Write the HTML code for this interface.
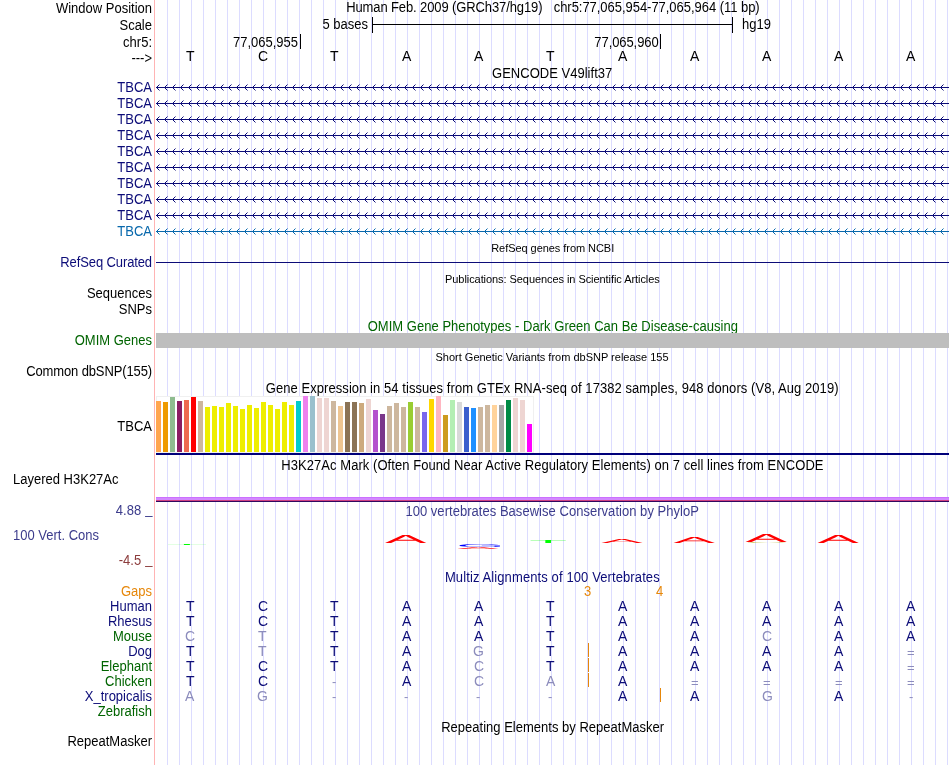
<!DOCTYPE html><html><head><meta charset="utf-8"><title>UCSC Genome Browser</title><style>
html,body{margin:0;padding:0;background:#fff;}
body{width:950px;height:765px;position:relative;overflow:hidden;font-family:"Liberation Sans",sans-serif;font-size:13px;color:#000;}
.t{position:absolute;white-space:pre;line-height:16px;height:16px;transform:scaleY(1.07);transform-origin:0 12.5px;}
.n,.s{transform:none;}
.r{text-align:right;left:0;width:152px;}
.c{text-align:center;left:156px;width:793px;}
.s{font-size:11px;}
.b{position:absolute;}
.nv{color:#0c0c78;}
.gr{color:#006400;}
svg{position:absolute;left:0;top:0;}
#w{position:absolute;left:0;top:0;width:950px;height:765px;will-change:transform;}
</style></head><body><div id="w">
<div class="b" style="left:0;top:0;width:950px;height:765px;background:repeating-linear-gradient(90deg,transparent 0,transparent 11px,#dcdcff 11px,#dcdcff 12px);background-position:156px 0;background-size:12px 100%;clip-path:inset(0 0 0 160px);"></div>
<div class="b" style="left:154px;top:0;width:1px;height:765px;background:#ffb4b4;"></div>
<div class="t r " style="top:1px;">Window Position</div>
<div class="t r " style="top:18px;">Scale</div>
<div class="t r " style="top:35px;">chr5:</div>
<div class="t r " style="top:51px;">---&gt;</div>
<div class="t " style="left:346.20px;top:0px;letter-spacing:-0.111px;">Human Feb. 2009 (GRCh37/hg19)</div>
<div class="t " style="left:553.70px;top:0px;letter-spacing:-0.036px;">chr5:77,065,954-77,065,964 (11 bp)</div>
<div class="t " style="left:168px;width:200px;text-align:right;top:17px;">5 bases</div>
<div class="t " style="left:742px;top:17px;">hg19</div>
<div class="b" style="left:372px;top:24px;width:361px;height:1px;background:#000"></div>
<div class="b" style="left:372px;top:17px;width:1px;height:16px;background:#000"></div>
<div class="b" style="left:732px;top:17px;width:1px;height:16px;background:#000"></div>
<div class="t " style="left:98px;width:200px;text-align:right;top:35px;">77,065,955</div>
<div class="b" style="left:300px;top:34px;width:1px;height:15px;background:#000"></div>
<div class="t " style="left:458.6px;width:200px;text-align:right;top:35px;letter-spacing:-0.08px">77,065,960</div>
<div class="b" style="left:660px;top:34px;width:1px;height:15px;background:#000"></div>
<div class="t n" style="left:186px;top:48px;font-size:14px;">T</div>
<div class="t n" style="left:258px;top:48px;font-size:14px;">C</div>
<div class="t n" style="left:330px;top:48px;font-size:14px;">T</div>
<div class="t n" style="left:402px;top:48px;font-size:14px;">A</div>
<div class="t n" style="left:474px;top:48px;font-size:14px;">A</div>
<div class="t n" style="left:546px;top:48px;font-size:14px;">T</div>
<div class="t n" style="left:618px;top:48px;font-size:14px;">A</div>
<div class="t n" style="left:690px;top:48px;font-size:14px;">A</div>
<div class="t n" style="left:762px;top:48px;font-size:14px;">A</div>
<div class="t n" style="left:834px;top:48px;font-size:14px;">A</div>
<div class="t n" style="left:906px;top:48px;font-size:14px;">A</div>
<div class="t " style="left:492.00px;top:66px;letter-spacing:0.019px;">GENCODE V49lift37</div>
<div class="t r " style="top:80px;color:#0c0c78">TBCA</div>
<div class="t r " style="top:96px;color:#0c0c78">TBCA</div>
<div class="t r " style="top:112px;color:#0c0c78">TBCA</div>
<div class="t r " style="top:128px;color:#0c0c78">TBCA</div>
<div class="t r " style="top:144px;color:#0c0c78">TBCA</div>
<div class="t r " style="top:160px;color:#0c0c78">TBCA</div>
<div class="t r " style="top:176px;color:#0c0c78">TBCA</div>
<div class="t r " style="top:192px;color:#0c0c78">TBCA</div>
<div class="t r " style="top:208px;color:#0c0c78">TBCA</div>
<div class="t r " style="top:224px;color:#0868ac">TBCA</div>
<svg width="950" height="765" viewBox="0 0 950 765"><path d="M156 87.5 H949" stroke="#0c0c78" stroke-width="1" fill="none"/><path d="M159.5 84.5L156.5 87.5L159.5 90.5M167.5 84.5L164.5 87.5L167.5 90.5M175.5 84.5L172.5 87.5L175.5 90.5M183.5 84.5L180.5 87.5L183.5 90.5M191.5 84.5L188.5 87.5L191.5 90.5M199.5 84.5L196.5 87.5L199.5 90.5M207.5 84.5L204.5 87.5L207.5 90.5M215.5 84.5L212.5 87.5L215.5 90.5M223.5 84.5L220.5 87.5L223.5 90.5M231.5 84.5L228.5 87.5L231.5 90.5M239.5 84.5L236.5 87.5L239.5 90.5M247.5 84.5L244.5 87.5L247.5 90.5M255.5 84.5L252.5 87.5L255.5 90.5M263.5 84.5L260.5 87.5L263.5 90.5M271.5 84.5L268.5 87.5L271.5 90.5M279.5 84.5L276.5 87.5L279.5 90.5M287.5 84.5L284.5 87.5L287.5 90.5M295.5 84.5L292.5 87.5L295.5 90.5M303.5 84.5L300.5 87.5L303.5 90.5M311.5 84.5L308.5 87.5L311.5 90.5M319.5 84.5L316.5 87.5L319.5 90.5M327.5 84.5L324.5 87.5L327.5 90.5M335.5 84.5L332.5 87.5L335.5 90.5M343.5 84.5L340.5 87.5L343.5 90.5M351.5 84.5L348.5 87.5L351.5 90.5M359.5 84.5L356.5 87.5L359.5 90.5M367.5 84.5L364.5 87.5L367.5 90.5M375.5 84.5L372.5 87.5L375.5 90.5M383.5 84.5L380.5 87.5L383.5 90.5M391.5 84.5L388.5 87.5L391.5 90.5M399.5 84.5L396.5 87.5L399.5 90.5M407.5 84.5L404.5 87.5L407.5 90.5M415.5 84.5L412.5 87.5L415.5 90.5M423.5 84.5L420.5 87.5L423.5 90.5M431.5 84.5L428.5 87.5L431.5 90.5M439.5 84.5L436.5 87.5L439.5 90.5M447.5 84.5L444.5 87.5L447.5 90.5M455.5 84.5L452.5 87.5L455.5 90.5M463.5 84.5L460.5 87.5L463.5 90.5M471.5 84.5L468.5 87.5L471.5 90.5M479.5 84.5L476.5 87.5L479.5 90.5M487.5 84.5L484.5 87.5L487.5 90.5M495.5 84.5L492.5 87.5L495.5 90.5M503.5 84.5L500.5 87.5L503.5 90.5M511.5 84.5L508.5 87.5L511.5 90.5M519.5 84.5L516.5 87.5L519.5 90.5M527.5 84.5L524.5 87.5L527.5 90.5M535.5 84.5L532.5 87.5L535.5 90.5M543.5 84.5L540.5 87.5L543.5 90.5M551.5 84.5L548.5 87.5L551.5 90.5M559.5 84.5L556.5 87.5L559.5 90.5M567.5 84.5L564.5 87.5L567.5 90.5M575.5 84.5L572.5 87.5L575.5 90.5M583.5 84.5L580.5 87.5L583.5 90.5M591.5 84.5L588.5 87.5L591.5 90.5M599.5 84.5L596.5 87.5L599.5 90.5M607.5 84.5L604.5 87.5L607.5 90.5M615.5 84.5L612.5 87.5L615.5 90.5M623.5 84.5L620.5 87.5L623.5 90.5M631.5 84.5L628.5 87.5L631.5 90.5M639.5 84.5L636.5 87.5L639.5 90.5M647.5 84.5L644.5 87.5L647.5 90.5M655.5 84.5L652.5 87.5L655.5 90.5M663.5 84.5L660.5 87.5L663.5 90.5M671.5 84.5L668.5 87.5L671.5 90.5M679.5 84.5L676.5 87.5L679.5 90.5M687.5 84.5L684.5 87.5L687.5 90.5M695.5 84.5L692.5 87.5L695.5 90.5M703.5 84.5L700.5 87.5L703.5 90.5M711.5 84.5L708.5 87.5L711.5 90.5M719.5 84.5L716.5 87.5L719.5 90.5M727.5 84.5L724.5 87.5L727.5 90.5M735.5 84.5L732.5 87.5L735.5 90.5M743.5 84.5L740.5 87.5L743.5 90.5M751.5 84.5L748.5 87.5L751.5 90.5M759.5 84.5L756.5 87.5L759.5 90.5M767.5 84.5L764.5 87.5L767.5 90.5M775.5 84.5L772.5 87.5L775.5 90.5M783.5 84.5L780.5 87.5L783.5 90.5M791.5 84.5L788.5 87.5L791.5 90.5M799.5 84.5L796.5 87.5L799.5 90.5M807.5 84.5L804.5 87.5L807.5 90.5M815.5 84.5L812.5 87.5L815.5 90.5M823.5 84.5L820.5 87.5L823.5 90.5M831.5 84.5L828.5 87.5L831.5 90.5M839.5 84.5L836.5 87.5L839.5 90.5M847.5 84.5L844.5 87.5L847.5 90.5M855.5 84.5L852.5 87.5L855.5 90.5M863.5 84.5L860.5 87.5L863.5 90.5M871.5 84.5L868.5 87.5L871.5 90.5M879.5 84.5L876.5 87.5L879.5 90.5M887.5 84.5L884.5 87.5L887.5 90.5M895.5 84.5L892.5 87.5L895.5 90.5M903.5 84.5L900.5 87.5L903.5 90.5M911.5 84.5L908.5 87.5L911.5 90.5M919.5 84.5L916.5 87.5L919.5 90.5M927.5 84.5L924.5 87.5L927.5 90.5M935.5 84.5L932.5 87.5L935.5 90.5M943.5 84.5L940.5 87.5L943.5 90.5" stroke="#0c0c78" stroke-width="1" fill="none"/><path d="M156 103.5 H949" stroke="#0c0c78" stroke-width="1" fill="none"/><path d="M159.5 100.5L156.5 103.5L159.5 106.5M167.5 100.5L164.5 103.5L167.5 106.5M175.5 100.5L172.5 103.5L175.5 106.5M183.5 100.5L180.5 103.5L183.5 106.5M191.5 100.5L188.5 103.5L191.5 106.5M199.5 100.5L196.5 103.5L199.5 106.5M207.5 100.5L204.5 103.5L207.5 106.5M215.5 100.5L212.5 103.5L215.5 106.5M223.5 100.5L220.5 103.5L223.5 106.5M231.5 100.5L228.5 103.5L231.5 106.5M239.5 100.5L236.5 103.5L239.5 106.5M247.5 100.5L244.5 103.5L247.5 106.5M255.5 100.5L252.5 103.5L255.5 106.5M263.5 100.5L260.5 103.5L263.5 106.5M271.5 100.5L268.5 103.5L271.5 106.5M279.5 100.5L276.5 103.5L279.5 106.5M287.5 100.5L284.5 103.5L287.5 106.5M295.5 100.5L292.5 103.5L295.5 106.5M303.5 100.5L300.5 103.5L303.5 106.5M311.5 100.5L308.5 103.5L311.5 106.5M319.5 100.5L316.5 103.5L319.5 106.5M327.5 100.5L324.5 103.5L327.5 106.5M335.5 100.5L332.5 103.5L335.5 106.5M343.5 100.5L340.5 103.5L343.5 106.5M351.5 100.5L348.5 103.5L351.5 106.5M359.5 100.5L356.5 103.5L359.5 106.5M367.5 100.5L364.5 103.5L367.5 106.5M375.5 100.5L372.5 103.5L375.5 106.5M383.5 100.5L380.5 103.5L383.5 106.5M391.5 100.5L388.5 103.5L391.5 106.5M399.5 100.5L396.5 103.5L399.5 106.5M407.5 100.5L404.5 103.5L407.5 106.5M415.5 100.5L412.5 103.5L415.5 106.5M423.5 100.5L420.5 103.5L423.5 106.5M431.5 100.5L428.5 103.5L431.5 106.5M439.5 100.5L436.5 103.5L439.5 106.5M447.5 100.5L444.5 103.5L447.5 106.5M455.5 100.5L452.5 103.5L455.5 106.5M463.5 100.5L460.5 103.5L463.5 106.5M471.5 100.5L468.5 103.5L471.5 106.5M479.5 100.5L476.5 103.5L479.5 106.5M487.5 100.5L484.5 103.5L487.5 106.5M495.5 100.5L492.5 103.5L495.5 106.5M503.5 100.5L500.5 103.5L503.5 106.5M511.5 100.5L508.5 103.5L511.5 106.5M519.5 100.5L516.5 103.5L519.5 106.5M527.5 100.5L524.5 103.5L527.5 106.5M535.5 100.5L532.5 103.5L535.5 106.5M543.5 100.5L540.5 103.5L543.5 106.5M551.5 100.5L548.5 103.5L551.5 106.5M559.5 100.5L556.5 103.5L559.5 106.5M567.5 100.5L564.5 103.5L567.5 106.5M575.5 100.5L572.5 103.5L575.5 106.5M583.5 100.5L580.5 103.5L583.5 106.5M591.5 100.5L588.5 103.5L591.5 106.5M599.5 100.5L596.5 103.5L599.5 106.5M607.5 100.5L604.5 103.5L607.5 106.5M615.5 100.5L612.5 103.5L615.5 106.5M623.5 100.5L620.5 103.5L623.5 106.5M631.5 100.5L628.5 103.5L631.5 106.5M639.5 100.5L636.5 103.5L639.5 106.5M647.5 100.5L644.5 103.5L647.5 106.5M655.5 100.5L652.5 103.5L655.5 106.5M663.5 100.5L660.5 103.5L663.5 106.5M671.5 100.5L668.5 103.5L671.5 106.5M679.5 100.5L676.5 103.5L679.5 106.5M687.5 100.5L684.5 103.5L687.5 106.5M695.5 100.5L692.5 103.5L695.5 106.5M703.5 100.5L700.5 103.5L703.5 106.5M711.5 100.5L708.5 103.5L711.5 106.5M719.5 100.5L716.5 103.5L719.5 106.5M727.5 100.5L724.5 103.5L727.5 106.5M735.5 100.5L732.5 103.5L735.5 106.5M743.5 100.5L740.5 103.5L743.5 106.5M751.5 100.5L748.5 103.5L751.5 106.5M759.5 100.5L756.5 103.5L759.5 106.5M767.5 100.5L764.5 103.5L767.5 106.5M775.5 100.5L772.5 103.5L775.5 106.5M783.5 100.5L780.5 103.5L783.5 106.5M791.5 100.5L788.5 103.5L791.5 106.5M799.5 100.5L796.5 103.5L799.5 106.5M807.5 100.5L804.5 103.5L807.5 106.5M815.5 100.5L812.5 103.5L815.5 106.5M823.5 100.5L820.5 103.5L823.5 106.5M831.5 100.5L828.5 103.5L831.5 106.5M839.5 100.5L836.5 103.5L839.5 106.5M847.5 100.5L844.5 103.5L847.5 106.5M855.5 100.5L852.5 103.5L855.5 106.5M863.5 100.5L860.5 103.5L863.5 106.5M871.5 100.5L868.5 103.5L871.5 106.5M879.5 100.5L876.5 103.5L879.5 106.5M887.5 100.5L884.5 103.5L887.5 106.5M895.5 100.5L892.5 103.5L895.5 106.5M903.5 100.5L900.5 103.5L903.5 106.5M911.5 100.5L908.5 103.5L911.5 106.5M919.5 100.5L916.5 103.5L919.5 106.5M927.5 100.5L924.5 103.5L927.5 106.5M935.5 100.5L932.5 103.5L935.5 106.5M943.5 100.5L940.5 103.5L943.5 106.5" stroke="#0c0c78" stroke-width="1" fill="none"/><path d="M156 119.5 H949" stroke="#0c0c78" stroke-width="1" fill="none"/><path d="M159.5 116.5L156.5 119.5L159.5 122.5M167.5 116.5L164.5 119.5L167.5 122.5M175.5 116.5L172.5 119.5L175.5 122.5M183.5 116.5L180.5 119.5L183.5 122.5M191.5 116.5L188.5 119.5L191.5 122.5M199.5 116.5L196.5 119.5L199.5 122.5M207.5 116.5L204.5 119.5L207.5 122.5M215.5 116.5L212.5 119.5L215.5 122.5M223.5 116.5L220.5 119.5L223.5 122.5M231.5 116.5L228.5 119.5L231.5 122.5M239.5 116.5L236.5 119.5L239.5 122.5M247.5 116.5L244.5 119.5L247.5 122.5M255.5 116.5L252.5 119.5L255.5 122.5M263.5 116.5L260.5 119.5L263.5 122.5M271.5 116.5L268.5 119.5L271.5 122.5M279.5 116.5L276.5 119.5L279.5 122.5M287.5 116.5L284.5 119.5L287.5 122.5M295.5 116.5L292.5 119.5L295.5 122.5M303.5 116.5L300.5 119.5L303.5 122.5M311.5 116.5L308.5 119.5L311.5 122.5M319.5 116.5L316.5 119.5L319.5 122.5M327.5 116.5L324.5 119.5L327.5 122.5M335.5 116.5L332.5 119.5L335.5 122.5M343.5 116.5L340.5 119.5L343.5 122.5M351.5 116.5L348.5 119.5L351.5 122.5M359.5 116.5L356.5 119.5L359.5 122.5M367.5 116.5L364.5 119.5L367.5 122.5M375.5 116.5L372.5 119.5L375.5 122.5M383.5 116.5L380.5 119.5L383.5 122.5M391.5 116.5L388.5 119.5L391.5 122.5M399.5 116.5L396.5 119.5L399.5 122.5M407.5 116.5L404.5 119.5L407.5 122.5M415.5 116.5L412.5 119.5L415.5 122.5M423.5 116.5L420.5 119.5L423.5 122.5M431.5 116.5L428.5 119.5L431.5 122.5M439.5 116.5L436.5 119.5L439.5 122.5M447.5 116.5L444.5 119.5L447.5 122.5M455.5 116.5L452.5 119.5L455.5 122.5M463.5 116.5L460.5 119.5L463.5 122.5M471.5 116.5L468.5 119.5L471.5 122.5M479.5 116.5L476.5 119.5L479.5 122.5M487.5 116.5L484.5 119.5L487.5 122.5M495.5 116.5L492.5 119.5L495.5 122.5M503.5 116.5L500.5 119.5L503.5 122.5M511.5 116.5L508.5 119.5L511.5 122.5M519.5 116.5L516.5 119.5L519.5 122.5M527.5 116.5L524.5 119.5L527.5 122.5M535.5 116.5L532.5 119.5L535.5 122.5M543.5 116.5L540.5 119.5L543.5 122.5M551.5 116.5L548.5 119.5L551.5 122.5M559.5 116.5L556.5 119.5L559.5 122.5M567.5 116.5L564.5 119.5L567.5 122.5M575.5 116.5L572.5 119.5L575.5 122.5M583.5 116.5L580.5 119.5L583.5 122.5M591.5 116.5L588.5 119.5L591.5 122.5M599.5 116.5L596.5 119.5L599.5 122.5M607.5 116.5L604.5 119.5L607.5 122.5M615.5 116.5L612.5 119.5L615.5 122.5M623.5 116.5L620.5 119.5L623.5 122.5M631.5 116.5L628.5 119.5L631.5 122.5M639.5 116.5L636.5 119.5L639.5 122.5M647.5 116.5L644.5 119.5L647.5 122.5M655.5 116.5L652.5 119.5L655.5 122.5M663.5 116.5L660.5 119.5L663.5 122.5M671.5 116.5L668.5 119.5L671.5 122.5M679.5 116.5L676.5 119.5L679.5 122.5M687.5 116.5L684.5 119.5L687.5 122.5M695.5 116.5L692.5 119.5L695.5 122.5M703.5 116.5L700.5 119.5L703.5 122.5M711.5 116.5L708.5 119.5L711.5 122.5M719.5 116.5L716.5 119.5L719.5 122.5M727.5 116.5L724.5 119.5L727.5 122.5M735.5 116.5L732.5 119.5L735.5 122.5M743.5 116.5L740.5 119.5L743.5 122.5M751.5 116.5L748.5 119.5L751.5 122.5M759.5 116.5L756.5 119.5L759.5 122.5M767.5 116.5L764.5 119.5L767.5 122.5M775.5 116.5L772.5 119.5L775.5 122.5M783.5 116.5L780.5 119.5L783.5 122.5M791.5 116.5L788.5 119.5L791.5 122.5M799.5 116.5L796.5 119.5L799.5 122.5M807.5 116.5L804.5 119.5L807.5 122.5M815.5 116.5L812.5 119.5L815.5 122.5M823.5 116.5L820.5 119.5L823.5 122.5M831.5 116.5L828.5 119.5L831.5 122.5M839.5 116.5L836.5 119.5L839.5 122.5M847.5 116.5L844.5 119.5L847.5 122.5M855.5 116.5L852.5 119.5L855.5 122.5M863.5 116.5L860.5 119.5L863.5 122.5M871.5 116.5L868.5 119.5L871.5 122.5M879.5 116.5L876.5 119.5L879.5 122.5M887.5 116.5L884.5 119.5L887.5 122.5M895.5 116.5L892.5 119.5L895.5 122.5M903.5 116.5L900.5 119.5L903.5 122.5M911.5 116.5L908.5 119.5L911.5 122.5M919.5 116.5L916.5 119.5L919.5 122.5M927.5 116.5L924.5 119.5L927.5 122.5M935.5 116.5L932.5 119.5L935.5 122.5M943.5 116.5L940.5 119.5L943.5 122.5" stroke="#0c0c78" stroke-width="1" fill="none"/><path d="M156 135.5 H949" stroke="#0c0c78" stroke-width="1" fill="none"/><path d="M159.5 132.5L156.5 135.5L159.5 138.5M167.5 132.5L164.5 135.5L167.5 138.5M175.5 132.5L172.5 135.5L175.5 138.5M183.5 132.5L180.5 135.5L183.5 138.5M191.5 132.5L188.5 135.5L191.5 138.5M199.5 132.5L196.5 135.5L199.5 138.5M207.5 132.5L204.5 135.5L207.5 138.5M215.5 132.5L212.5 135.5L215.5 138.5M223.5 132.5L220.5 135.5L223.5 138.5M231.5 132.5L228.5 135.5L231.5 138.5M239.5 132.5L236.5 135.5L239.5 138.5M247.5 132.5L244.5 135.5L247.5 138.5M255.5 132.5L252.5 135.5L255.5 138.5M263.5 132.5L260.5 135.5L263.5 138.5M271.5 132.5L268.5 135.5L271.5 138.5M279.5 132.5L276.5 135.5L279.5 138.5M287.5 132.5L284.5 135.5L287.5 138.5M295.5 132.5L292.5 135.5L295.5 138.5M303.5 132.5L300.5 135.5L303.5 138.5M311.5 132.5L308.5 135.5L311.5 138.5M319.5 132.5L316.5 135.5L319.5 138.5M327.5 132.5L324.5 135.5L327.5 138.5M335.5 132.5L332.5 135.5L335.5 138.5M343.5 132.5L340.5 135.5L343.5 138.5M351.5 132.5L348.5 135.5L351.5 138.5M359.5 132.5L356.5 135.5L359.5 138.5M367.5 132.5L364.5 135.5L367.5 138.5M375.5 132.5L372.5 135.5L375.5 138.5M383.5 132.5L380.5 135.5L383.5 138.5M391.5 132.5L388.5 135.5L391.5 138.5M399.5 132.5L396.5 135.5L399.5 138.5M407.5 132.5L404.5 135.5L407.5 138.5M415.5 132.5L412.5 135.5L415.5 138.5M423.5 132.5L420.5 135.5L423.5 138.5M431.5 132.5L428.5 135.5L431.5 138.5M439.5 132.5L436.5 135.5L439.5 138.5M447.5 132.5L444.5 135.5L447.5 138.5M455.5 132.5L452.5 135.5L455.5 138.5M463.5 132.5L460.5 135.5L463.5 138.5M471.5 132.5L468.5 135.5L471.5 138.5M479.5 132.5L476.5 135.5L479.5 138.5M487.5 132.5L484.5 135.5L487.5 138.5M495.5 132.5L492.5 135.5L495.5 138.5M503.5 132.5L500.5 135.5L503.5 138.5M511.5 132.5L508.5 135.5L511.5 138.5M519.5 132.5L516.5 135.5L519.5 138.5M527.5 132.5L524.5 135.5L527.5 138.5M535.5 132.5L532.5 135.5L535.5 138.5M543.5 132.5L540.5 135.5L543.5 138.5M551.5 132.5L548.5 135.5L551.5 138.5M559.5 132.5L556.5 135.5L559.5 138.5M567.5 132.5L564.5 135.5L567.5 138.5M575.5 132.5L572.5 135.5L575.5 138.5M583.5 132.5L580.5 135.5L583.5 138.5M591.5 132.5L588.5 135.5L591.5 138.5M599.5 132.5L596.5 135.5L599.5 138.5M607.5 132.5L604.5 135.5L607.5 138.5M615.5 132.5L612.5 135.5L615.5 138.5M623.5 132.5L620.5 135.5L623.5 138.5M631.5 132.5L628.5 135.5L631.5 138.5M639.5 132.5L636.5 135.5L639.5 138.5M647.5 132.5L644.5 135.5L647.5 138.5M655.5 132.5L652.5 135.5L655.5 138.5M663.5 132.5L660.5 135.5L663.5 138.5M671.5 132.5L668.5 135.5L671.5 138.5M679.5 132.5L676.5 135.5L679.5 138.5M687.5 132.5L684.5 135.5L687.5 138.5M695.5 132.5L692.5 135.5L695.5 138.5M703.5 132.5L700.5 135.5L703.5 138.5M711.5 132.5L708.5 135.5L711.5 138.5M719.5 132.5L716.5 135.5L719.5 138.5M727.5 132.5L724.5 135.5L727.5 138.5M735.5 132.5L732.5 135.5L735.5 138.5M743.5 132.5L740.5 135.5L743.5 138.5M751.5 132.5L748.5 135.5L751.5 138.5M759.5 132.5L756.5 135.5L759.5 138.5M767.5 132.5L764.5 135.5L767.5 138.5M775.5 132.5L772.5 135.5L775.5 138.5M783.5 132.5L780.5 135.5L783.5 138.5M791.5 132.5L788.5 135.5L791.5 138.5M799.5 132.5L796.5 135.5L799.5 138.5M807.5 132.5L804.5 135.5L807.5 138.5M815.5 132.5L812.5 135.5L815.5 138.5M823.5 132.5L820.5 135.5L823.5 138.5M831.5 132.5L828.5 135.5L831.5 138.5M839.5 132.5L836.5 135.5L839.5 138.5M847.5 132.5L844.5 135.5L847.5 138.5M855.5 132.5L852.5 135.5L855.5 138.5M863.5 132.5L860.5 135.5L863.5 138.5M871.5 132.5L868.5 135.5L871.5 138.5M879.5 132.5L876.5 135.5L879.5 138.5M887.5 132.5L884.5 135.5L887.5 138.5M895.5 132.5L892.5 135.5L895.5 138.5M903.5 132.5L900.5 135.5L903.5 138.5M911.5 132.5L908.5 135.5L911.5 138.5M919.5 132.5L916.5 135.5L919.5 138.5M927.5 132.5L924.5 135.5L927.5 138.5M935.5 132.5L932.5 135.5L935.5 138.5M943.5 132.5L940.5 135.5L943.5 138.5" stroke="#0c0c78" stroke-width="1" fill="none"/><path d="M156 151.5 H949" stroke="#0c0c78" stroke-width="1" fill="none"/><path d="M159.5 148.5L156.5 151.5L159.5 154.5M167.5 148.5L164.5 151.5L167.5 154.5M175.5 148.5L172.5 151.5L175.5 154.5M183.5 148.5L180.5 151.5L183.5 154.5M191.5 148.5L188.5 151.5L191.5 154.5M199.5 148.5L196.5 151.5L199.5 154.5M207.5 148.5L204.5 151.5L207.5 154.5M215.5 148.5L212.5 151.5L215.5 154.5M223.5 148.5L220.5 151.5L223.5 154.5M231.5 148.5L228.5 151.5L231.5 154.5M239.5 148.5L236.5 151.5L239.5 154.5M247.5 148.5L244.5 151.5L247.5 154.5M255.5 148.5L252.5 151.5L255.5 154.5M263.5 148.5L260.5 151.5L263.5 154.5M271.5 148.5L268.5 151.5L271.5 154.5M279.5 148.5L276.5 151.5L279.5 154.5M287.5 148.5L284.5 151.5L287.5 154.5M295.5 148.5L292.5 151.5L295.5 154.5M303.5 148.5L300.5 151.5L303.5 154.5M311.5 148.5L308.5 151.5L311.5 154.5M319.5 148.5L316.5 151.5L319.5 154.5M327.5 148.5L324.5 151.5L327.5 154.5M335.5 148.5L332.5 151.5L335.5 154.5M343.5 148.5L340.5 151.5L343.5 154.5M351.5 148.5L348.5 151.5L351.5 154.5M359.5 148.5L356.5 151.5L359.5 154.5M367.5 148.5L364.5 151.5L367.5 154.5M375.5 148.5L372.5 151.5L375.5 154.5M383.5 148.5L380.5 151.5L383.5 154.5M391.5 148.5L388.5 151.5L391.5 154.5M399.5 148.5L396.5 151.5L399.5 154.5M407.5 148.5L404.5 151.5L407.5 154.5M415.5 148.5L412.5 151.5L415.5 154.5M423.5 148.5L420.5 151.5L423.5 154.5M431.5 148.5L428.5 151.5L431.5 154.5M439.5 148.5L436.5 151.5L439.5 154.5M447.5 148.5L444.5 151.5L447.5 154.5M455.5 148.5L452.5 151.5L455.5 154.5M463.5 148.5L460.5 151.5L463.5 154.5M471.5 148.5L468.5 151.5L471.5 154.5M479.5 148.5L476.5 151.5L479.5 154.5M487.5 148.5L484.5 151.5L487.5 154.5M495.5 148.5L492.5 151.5L495.5 154.5M503.5 148.5L500.5 151.5L503.5 154.5M511.5 148.5L508.5 151.5L511.5 154.5M519.5 148.5L516.5 151.5L519.5 154.5M527.5 148.5L524.5 151.5L527.5 154.5M535.5 148.5L532.5 151.5L535.5 154.5M543.5 148.5L540.5 151.5L543.5 154.5M551.5 148.5L548.5 151.5L551.5 154.5M559.5 148.5L556.5 151.5L559.5 154.5M567.5 148.5L564.5 151.5L567.5 154.5M575.5 148.5L572.5 151.5L575.5 154.5M583.5 148.5L580.5 151.5L583.5 154.5M591.5 148.5L588.5 151.5L591.5 154.5M599.5 148.5L596.5 151.5L599.5 154.5M607.5 148.5L604.5 151.5L607.5 154.5M615.5 148.5L612.5 151.5L615.5 154.5M623.5 148.5L620.5 151.5L623.5 154.5M631.5 148.5L628.5 151.5L631.5 154.5M639.5 148.5L636.5 151.5L639.5 154.5M647.5 148.5L644.5 151.5L647.5 154.5M655.5 148.5L652.5 151.5L655.5 154.5M663.5 148.5L660.5 151.5L663.5 154.5M671.5 148.5L668.5 151.5L671.5 154.5M679.5 148.5L676.5 151.5L679.5 154.5M687.5 148.5L684.5 151.5L687.5 154.5M695.5 148.5L692.5 151.5L695.5 154.5M703.5 148.5L700.5 151.5L703.5 154.5M711.5 148.5L708.5 151.5L711.5 154.5M719.5 148.5L716.5 151.5L719.5 154.5M727.5 148.5L724.5 151.5L727.5 154.5M735.5 148.5L732.5 151.5L735.5 154.5M743.5 148.5L740.5 151.5L743.5 154.5M751.5 148.5L748.5 151.5L751.5 154.5M759.5 148.5L756.5 151.5L759.5 154.5M767.5 148.5L764.5 151.5L767.5 154.5M775.5 148.5L772.5 151.5L775.5 154.5M783.5 148.5L780.5 151.5L783.5 154.5M791.5 148.5L788.5 151.5L791.5 154.5M799.5 148.5L796.5 151.5L799.5 154.5M807.5 148.5L804.5 151.5L807.5 154.5M815.5 148.5L812.5 151.5L815.5 154.5M823.5 148.5L820.5 151.5L823.5 154.5M831.5 148.5L828.5 151.5L831.5 154.5M839.5 148.5L836.5 151.5L839.5 154.5M847.5 148.5L844.5 151.5L847.5 154.5M855.5 148.5L852.5 151.5L855.5 154.5M863.5 148.5L860.5 151.5L863.5 154.5M871.5 148.5L868.5 151.5L871.5 154.5M879.5 148.5L876.5 151.5L879.5 154.5M887.5 148.5L884.5 151.5L887.5 154.5M895.5 148.5L892.5 151.5L895.5 154.5M903.5 148.5L900.5 151.5L903.5 154.5M911.5 148.5L908.5 151.5L911.5 154.5M919.5 148.5L916.5 151.5L919.5 154.5M927.5 148.5L924.5 151.5L927.5 154.5M935.5 148.5L932.5 151.5L935.5 154.5M943.5 148.5L940.5 151.5L943.5 154.5" stroke="#0c0c78" stroke-width="1" fill="none"/><path d="M156 167.5 H949" stroke="#0c0c78" stroke-width="1" fill="none"/><path d="M159.5 164.5L156.5 167.5L159.5 170.5M167.5 164.5L164.5 167.5L167.5 170.5M175.5 164.5L172.5 167.5L175.5 170.5M183.5 164.5L180.5 167.5L183.5 170.5M191.5 164.5L188.5 167.5L191.5 170.5M199.5 164.5L196.5 167.5L199.5 170.5M207.5 164.5L204.5 167.5L207.5 170.5M215.5 164.5L212.5 167.5L215.5 170.5M223.5 164.5L220.5 167.5L223.5 170.5M231.5 164.5L228.5 167.5L231.5 170.5M239.5 164.5L236.5 167.5L239.5 170.5M247.5 164.5L244.5 167.5L247.5 170.5M255.5 164.5L252.5 167.5L255.5 170.5M263.5 164.5L260.5 167.5L263.5 170.5M271.5 164.5L268.5 167.5L271.5 170.5M279.5 164.5L276.5 167.5L279.5 170.5M287.5 164.5L284.5 167.5L287.5 170.5M295.5 164.5L292.5 167.5L295.5 170.5M303.5 164.5L300.5 167.5L303.5 170.5M311.5 164.5L308.5 167.5L311.5 170.5M319.5 164.5L316.5 167.5L319.5 170.5M327.5 164.5L324.5 167.5L327.5 170.5M335.5 164.5L332.5 167.5L335.5 170.5M343.5 164.5L340.5 167.5L343.5 170.5M351.5 164.5L348.5 167.5L351.5 170.5M359.5 164.5L356.5 167.5L359.5 170.5M367.5 164.5L364.5 167.5L367.5 170.5M375.5 164.5L372.5 167.5L375.5 170.5M383.5 164.5L380.5 167.5L383.5 170.5M391.5 164.5L388.5 167.5L391.5 170.5M399.5 164.5L396.5 167.5L399.5 170.5M407.5 164.5L404.5 167.5L407.5 170.5M415.5 164.5L412.5 167.5L415.5 170.5M423.5 164.5L420.5 167.5L423.5 170.5M431.5 164.5L428.5 167.5L431.5 170.5M439.5 164.5L436.5 167.5L439.5 170.5M447.5 164.5L444.5 167.5L447.5 170.5M455.5 164.5L452.5 167.5L455.5 170.5M463.5 164.5L460.5 167.5L463.5 170.5M471.5 164.5L468.5 167.5L471.5 170.5M479.5 164.5L476.5 167.5L479.5 170.5M487.5 164.5L484.5 167.5L487.5 170.5M495.5 164.5L492.5 167.5L495.5 170.5M503.5 164.5L500.5 167.5L503.5 170.5M511.5 164.5L508.5 167.5L511.5 170.5M519.5 164.5L516.5 167.5L519.5 170.5M527.5 164.5L524.5 167.5L527.5 170.5M535.5 164.5L532.5 167.5L535.5 170.5M543.5 164.5L540.5 167.5L543.5 170.5M551.5 164.5L548.5 167.5L551.5 170.5M559.5 164.5L556.5 167.5L559.5 170.5M567.5 164.5L564.5 167.5L567.5 170.5M575.5 164.5L572.5 167.5L575.5 170.5M583.5 164.5L580.5 167.5L583.5 170.5M591.5 164.5L588.5 167.5L591.5 170.5M599.5 164.5L596.5 167.5L599.5 170.5M607.5 164.5L604.5 167.5L607.5 170.5M615.5 164.5L612.5 167.5L615.5 170.5M623.5 164.5L620.5 167.5L623.5 170.5M631.5 164.5L628.5 167.5L631.5 170.5M639.5 164.5L636.5 167.5L639.5 170.5M647.5 164.5L644.5 167.5L647.5 170.5M655.5 164.5L652.5 167.5L655.5 170.5M663.5 164.5L660.5 167.5L663.5 170.5M671.5 164.5L668.5 167.5L671.5 170.5M679.5 164.5L676.5 167.5L679.5 170.5M687.5 164.5L684.5 167.5L687.5 170.5M695.5 164.5L692.5 167.5L695.5 170.5M703.5 164.5L700.5 167.5L703.5 170.5M711.5 164.5L708.5 167.5L711.5 170.5M719.5 164.5L716.5 167.5L719.5 170.5M727.5 164.5L724.5 167.5L727.5 170.5M735.5 164.5L732.5 167.5L735.5 170.5M743.5 164.5L740.5 167.5L743.5 170.5M751.5 164.5L748.5 167.5L751.5 170.5M759.5 164.5L756.5 167.5L759.5 170.5M767.5 164.5L764.5 167.5L767.5 170.5M775.5 164.5L772.5 167.5L775.5 170.5M783.5 164.5L780.5 167.5L783.5 170.5M791.5 164.5L788.5 167.5L791.5 170.5M799.5 164.5L796.5 167.5L799.5 170.5M807.5 164.5L804.5 167.5L807.5 170.5M815.5 164.5L812.5 167.5L815.5 170.5M823.5 164.5L820.5 167.5L823.5 170.5M831.5 164.5L828.5 167.5L831.5 170.5M839.5 164.5L836.5 167.5L839.5 170.5M847.5 164.5L844.5 167.5L847.5 170.5M855.5 164.5L852.5 167.5L855.5 170.5M863.5 164.5L860.5 167.5L863.5 170.5M871.5 164.5L868.5 167.5L871.5 170.5M879.5 164.5L876.5 167.5L879.5 170.5M887.5 164.5L884.5 167.5L887.5 170.5M895.5 164.5L892.5 167.5L895.5 170.5M903.5 164.5L900.5 167.5L903.5 170.5M911.5 164.5L908.5 167.5L911.5 170.5M919.5 164.5L916.5 167.5L919.5 170.5M927.5 164.5L924.5 167.5L927.5 170.5M935.5 164.5L932.5 167.5L935.5 170.5M943.5 164.5L940.5 167.5L943.5 170.5" stroke="#0c0c78" stroke-width="1" fill="none"/><path d="M156 183.5 H949" stroke="#0c0c78" stroke-width="1" fill="none"/><path d="M159.5 180.5L156.5 183.5L159.5 186.5M167.5 180.5L164.5 183.5L167.5 186.5M175.5 180.5L172.5 183.5L175.5 186.5M183.5 180.5L180.5 183.5L183.5 186.5M191.5 180.5L188.5 183.5L191.5 186.5M199.5 180.5L196.5 183.5L199.5 186.5M207.5 180.5L204.5 183.5L207.5 186.5M215.5 180.5L212.5 183.5L215.5 186.5M223.5 180.5L220.5 183.5L223.5 186.5M231.5 180.5L228.5 183.5L231.5 186.5M239.5 180.5L236.5 183.5L239.5 186.5M247.5 180.5L244.5 183.5L247.5 186.5M255.5 180.5L252.5 183.5L255.5 186.5M263.5 180.5L260.5 183.5L263.5 186.5M271.5 180.5L268.5 183.5L271.5 186.5M279.5 180.5L276.5 183.5L279.5 186.5M287.5 180.5L284.5 183.5L287.5 186.5M295.5 180.5L292.5 183.5L295.5 186.5M303.5 180.5L300.5 183.5L303.5 186.5M311.5 180.5L308.5 183.5L311.5 186.5M319.5 180.5L316.5 183.5L319.5 186.5M327.5 180.5L324.5 183.5L327.5 186.5M335.5 180.5L332.5 183.5L335.5 186.5M343.5 180.5L340.5 183.5L343.5 186.5M351.5 180.5L348.5 183.5L351.5 186.5M359.5 180.5L356.5 183.5L359.5 186.5M367.5 180.5L364.5 183.5L367.5 186.5M375.5 180.5L372.5 183.5L375.5 186.5M383.5 180.5L380.5 183.5L383.5 186.5M391.5 180.5L388.5 183.5L391.5 186.5M399.5 180.5L396.5 183.5L399.5 186.5M407.5 180.5L404.5 183.5L407.5 186.5M415.5 180.5L412.5 183.5L415.5 186.5M423.5 180.5L420.5 183.5L423.5 186.5M431.5 180.5L428.5 183.5L431.5 186.5M439.5 180.5L436.5 183.5L439.5 186.5M447.5 180.5L444.5 183.5L447.5 186.5M455.5 180.5L452.5 183.5L455.5 186.5M463.5 180.5L460.5 183.5L463.5 186.5M471.5 180.5L468.5 183.5L471.5 186.5M479.5 180.5L476.5 183.5L479.5 186.5M487.5 180.5L484.5 183.5L487.5 186.5M495.5 180.5L492.5 183.5L495.5 186.5M503.5 180.5L500.5 183.5L503.5 186.5M511.5 180.5L508.5 183.5L511.5 186.5M519.5 180.5L516.5 183.5L519.5 186.5M527.5 180.5L524.5 183.5L527.5 186.5M535.5 180.5L532.5 183.5L535.5 186.5M543.5 180.5L540.5 183.5L543.5 186.5M551.5 180.5L548.5 183.5L551.5 186.5M559.5 180.5L556.5 183.5L559.5 186.5M567.5 180.5L564.5 183.5L567.5 186.5M575.5 180.5L572.5 183.5L575.5 186.5M583.5 180.5L580.5 183.5L583.5 186.5M591.5 180.5L588.5 183.5L591.5 186.5M599.5 180.5L596.5 183.5L599.5 186.5M607.5 180.5L604.5 183.5L607.5 186.5M615.5 180.5L612.5 183.5L615.5 186.5M623.5 180.5L620.5 183.5L623.5 186.5M631.5 180.5L628.5 183.5L631.5 186.5M639.5 180.5L636.5 183.5L639.5 186.5M647.5 180.5L644.5 183.5L647.5 186.5M655.5 180.5L652.5 183.5L655.5 186.5M663.5 180.5L660.5 183.5L663.5 186.5M671.5 180.5L668.5 183.5L671.5 186.5M679.5 180.5L676.5 183.5L679.5 186.5M687.5 180.5L684.5 183.5L687.5 186.5M695.5 180.5L692.5 183.5L695.5 186.5M703.5 180.5L700.5 183.5L703.5 186.5M711.5 180.5L708.5 183.5L711.5 186.5M719.5 180.5L716.5 183.5L719.5 186.5M727.5 180.5L724.5 183.5L727.5 186.5M735.5 180.5L732.5 183.5L735.5 186.5M743.5 180.5L740.5 183.5L743.5 186.5M751.5 180.5L748.5 183.5L751.5 186.5M759.5 180.5L756.5 183.5L759.5 186.5M767.5 180.5L764.5 183.5L767.5 186.5M775.5 180.5L772.5 183.5L775.5 186.5M783.5 180.5L780.5 183.5L783.5 186.5M791.5 180.5L788.5 183.5L791.5 186.5M799.5 180.5L796.5 183.5L799.5 186.5M807.5 180.5L804.5 183.5L807.5 186.5M815.5 180.5L812.5 183.5L815.5 186.5M823.5 180.5L820.5 183.5L823.5 186.5M831.5 180.5L828.5 183.5L831.5 186.5M839.5 180.5L836.5 183.5L839.5 186.5M847.5 180.5L844.5 183.5L847.5 186.5M855.5 180.5L852.5 183.5L855.5 186.5M863.5 180.5L860.5 183.5L863.5 186.5M871.5 180.5L868.5 183.5L871.5 186.5M879.5 180.5L876.5 183.5L879.5 186.5M887.5 180.5L884.5 183.5L887.5 186.5M895.5 180.5L892.5 183.5L895.5 186.5M903.5 180.5L900.5 183.5L903.5 186.5M911.5 180.5L908.5 183.5L911.5 186.5M919.5 180.5L916.5 183.5L919.5 186.5M927.5 180.5L924.5 183.5L927.5 186.5M935.5 180.5L932.5 183.5L935.5 186.5M943.5 180.5L940.5 183.5L943.5 186.5" stroke="#0c0c78" stroke-width="1" fill="none"/><path d="M156 199.5 H949" stroke="#0c0c78" stroke-width="1" fill="none"/><path d="M159.5 196.5L156.5 199.5L159.5 202.5M167.5 196.5L164.5 199.5L167.5 202.5M175.5 196.5L172.5 199.5L175.5 202.5M183.5 196.5L180.5 199.5L183.5 202.5M191.5 196.5L188.5 199.5L191.5 202.5M199.5 196.5L196.5 199.5L199.5 202.5M207.5 196.5L204.5 199.5L207.5 202.5M215.5 196.5L212.5 199.5L215.5 202.5M223.5 196.5L220.5 199.5L223.5 202.5M231.5 196.5L228.5 199.5L231.5 202.5M239.5 196.5L236.5 199.5L239.5 202.5M247.5 196.5L244.5 199.5L247.5 202.5M255.5 196.5L252.5 199.5L255.5 202.5M263.5 196.5L260.5 199.5L263.5 202.5M271.5 196.5L268.5 199.5L271.5 202.5M279.5 196.5L276.5 199.5L279.5 202.5M287.5 196.5L284.5 199.5L287.5 202.5M295.5 196.5L292.5 199.5L295.5 202.5M303.5 196.5L300.5 199.5L303.5 202.5M311.5 196.5L308.5 199.5L311.5 202.5M319.5 196.5L316.5 199.5L319.5 202.5M327.5 196.5L324.5 199.5L327.5 202.5M335.5 196.5L332.5 199.5L335.5 202.5M343.5 196.5L340.5 199.5L343.5 202.5M351.5 196.5L348.5 199.5L351.5 202.5M359.5 196.5L356.5 199.5L359.5 202.5M367.5 196.5L364.5 199.5L367.5 202.5M375.5 196.5L372.5 199.5L375.5 202.5M383.5 196.5L380.5 199.5L383.5 202.5M391.5 196.5L388.5 199.5L391.5 202.5M399.5 196.5L396.5 199.5L399.5 202.5M407.5 196.5L404.5 199.5L407.5 202.5M415.5 196.5L412.5 199.5L415.5 202.5M423.5 196.5L420.5 199.5L423.5 202.5M431.5 196.5L428.5 199.5L431.5 202.5M439.5 196.5L436.5 199.5L439.5 202.5M447.5 196.5L444.5 199.5L447.5 202.5M455.5 196.5L452.5 199.5L455.5 202.5M463.5 196.5L460.5 199.5L463.5 202.5M471.5 196.5L468.5 199.5L471.5 202.5M479.5 196.5L476.5 199.5L479.5 202.5M487.5 196.5L484.5 199.5L487.5 202.5M495.5 196.5L492.5 199.5L495.5 202.5M503.5 196.5L500.5 199.5L503.5 202.5M511.5 196.5L508.5 199.5L511.5 202.5M519.5 196.5L516.5 199.5L519.5 202.5M527.5 196.5L524.5 199.5L527.5 202.5M535.5 196.5L532.5 199.5L535.5 202.5M543.5 196.5L540.5 199.5L543.5 202.5M551.5 196.5L548.5 199.5L551.5 202.5M559.5 196.5L556.5 199.5L559.5 202.5M567.5 196.5L564.5 199.5L567.5 202.5M575.5 196.5L572.5 199.5L575.5 202.5M583.5 196.5L580.5 199.5L583.5 202.5M591.5 196.5L588.5 199.5L591.5 202.5M599.5 196.5L596.5 199.5L599.5 202.5M607.5 196.5L604.5 199.5L607.5 202.5M615.5 196.5L612.5 199.5L615.5 202.5M623.5 196.5L620.5 199.5L623.5 202.5M631.5 196.5L628.5 199.5L631.5 202.5M639.5 196.5L636.5 199.5L639.5 202.5M647.5 196.5L644.5 199.5L647.5 202.5M655.5 196.5L652.5 199.5L655.5 202.5M663.5 196.5L660.5 199.5L663.5 202.5M671.5 196.5L668.5 199.5L671.5 202.5M679.5 196.5L676.5 199.5L679.5 202.5M687.5 196.5L684.5 199.5L687.5 202.5M695.5 196.5L692.5 199.5L695.5 202.5M703.5 196.5L700.5 199.5L703.5 202.5M711.5 196.5L708.5 199.5L711.5 202.5M719.5 196.5L716.5 199.5L719.5 202.5M727.5 196.5L724.5 199.5L727.5 202.5M735.5 196.5L732.5 199.5L735.5 202.5M743.5 196.5L740.5 199.5L743.5 202.5M751.5 196.5L748.5 199.5L751.5 202.5M759.5 196.5L756.5 199.5L759.5 202.5M767.5 196.5L764.5 199.5L767.5 202.5M775.5 196.5L772.5 199.5L775.5 202.5M783.5 196.5L780.5 199.5L783.5 202.5M791.5 196.5L788.5 199.5L791.5 202.5M799.5 196.5L796.5 199.5L799.5 202.5M807.5 196.5L804.5 199.5L807.5 202.5M815.5 196.5L812.5 199.5L815.5 202.5M823.5 196.5L820.5 199.5L823.5 202.5M831.5 196.5L828.5 199.5L831.5 202.5M839.5 196.5L836.5 199.5L839.5 202.5M847.5 196.5L844.5 199.5L847.5 202.5M855.5 196.5L852.5 199.5L855.5 202.5M863.5 196.5L860.5 199.5L863.5 202.5M871.5 196.5L868.5 199.5L871.5 202.5M879.5 196.5L876.5 199.5L879.5 202.5M887.5 196.5L884.5 199.5L887.5 202.5M895.5 196.5L892.5 199.5L895.5 202.5M903.5 196.5L900.5 199.5L903.5 202.5M911.5 196.5L908.5 199.5L911.5 202.5M919.5 196.5L916.5 199.5L919.5 202.5M927.5 196.5L924.5 199.5L927.5 202.5M935.5 196.5L932.5 199.5L935.5 202.5M943.5 196.5L940.5 199.5L943.5 202.5" stroke="#0c0c78" stroke-width="1" fill="none"/><path d="M156 215.5 H949" stroke="#0c0c78" stroke-width="1" fill="none"/><path d="M159.5 212.5L156.5 215.5L159.5 218.5M167.5 212.5L164.5 215.5L167.5 218.5M175.5 212.5L172.5 215.5L175.5 218.5M183.5 212.5L180.5 215.5L183.5 218.5M191.5 212.5L188.5 215.5L191.5 218.5M199.5 212.5L196.5 215.5L199.5 218.5M207.5 212.5L204.5 215.5L207.5 218.5M215.5 212.5L212.5 215.5L215.5 218.5M223.5 212.5L220.5 215.5L223.5 218.5M231.5 212.5L228.5 215.5L231.5 218.5M239.5 212.5L236.5 215.5L239.5 218.5M247.5 212.5L244.5 215.5L247.5 218.5M255.5 212.5L252.5 215.5L255.5 218.5M263.5 212.5L260.5 215.5L263.5 218.5M271.5 212.5L268.5 215.5L271.5 218.5M279.5 212.5L276.5 215.5L279.5 218.5M287.5 212.5L284.5 215.5L287.5 218.5M295.5 212.5L292.5 215.5L295.5 218.5M303.5 212.5L300.5 215.5L303.5 218.5M311.5 212.5L308.5 215.5L311.5 218.5M319.5 212.5L316.5 215.5L319.5 218.5M327.5 212.5L324.5 215.5L327.5 218.5M335.5 212.5L332.5 215.5L335.5 218.5M343.5 212.5L340.5 215.5L343.5 218.5M351.5 212.5L348.5 215.5L351.5 218.5M359.5 212.5L356.5 215.5L359.5 218.5M367.5 212.5L364.5 215.5L367.5 218.5M375.5 212.5L372.5 215.5L375.5 218.5M383.5 212.5L380.5 215.5L383.5 218.5M391.5 212.5L388.5 215.5L391.5 218.5M399.5 212.5L396.5 215.5L399.5 218.5M407.5 212.5L404.5 215.5L407.5 218.5M415.5 212.5L412.5 215.5L415.5 218.5M423.5 212.5L420.5 215.5L423.5 218.5M431.5 212.5L428.5 215.5L431.5 218.5M439.5 212.5L436.5 215.5L439.5 218.5M447.5 212.5L444.5 215.5L447.5 218.5M455.5 212.5L452.5 215.5L455.5 218.5M463.5 212.5L460.5 215.5L463.5 218.5M471.5 212.5L468.5 215.5L471.5 218.5M479.5 212.5L476.5 215.5L479.5 218.5M487.5 212.5L484.5 215.5L487.5 218.5M495.5 212.5L492.5 215.5L495.5 218.5M503.5 212.5L500.5 215.5L503.5 218.5M511.5 212.5L508.5 215.5L511.5 218.5M519.5 212.5L516.5 215.5L519.5 218.5M527.5 212.5L524.5 215.5L527.5 218.5M535.5 212.5L532.5 215.5L535.5 218.5M543.5 212.5L540.5 215.5L543.5 218.5M551.5 212.5L548.5 215.5L551.5 218.5M559.5 212.5L556.5 215.5L559.5 218.5M567.5 212.5L564.5 215.5L567.5 218.5M575.5 212.5L572.5 215.5L575.5 218.5M583.5 212.5L580.5 215.5L583.5 218.5M591.5 212.5L588.5 215.5L591.5 218.5M599.5 212.5L596.5 215.5L599.5 218.5M607.5 212.5L604.5 215.5L607.5 218.5M615.5 212.5L612.5 215.5L615.5 218.5M623.5 212.5L620.5 215.5L623.5 218.5M631.5 212.5L628.5 215.5L631.5 218.5M639.5 212.5L636.5 215.5L639.5 218.5M647.5 212.5L644.5 215.5L647.5 218.5M655.5 212.5L652.5 215.5L655.5 218.5M663.5 212.5L660.5 215.5L663.5 218.5M671.5 212.5L668.5 215.5L671.5 218.5M679.5 212.5L676.5 215.5L679.5 218.5M687.5 212.5L684.5 215.5L687.5 218.5M695.5 212.5L692.5 215.5L695.5 218.5M703.5 212.5L700.5 215.5L703.5 218.5M711.5 212.5L708.5 215.5L711.5 218.5M719.5 212.5L716.5 215.5L719.5 218.5M727.5 212.5L724.5 215.5L727.5 218.5M735.5 212.5L732.5 215.5L735.5 218.5M743.5 212.5L740.5 215.5L743.5 218.5M751.5 212.5L748.5 215.5L751.5 218.5M759.5 212.5L756.5 215.5L759.5 218.5M767.5 212.5L764.5 215.5L767.5 218.5M775.5 212.5L772.5 215.5L775.5 218.5M783.5 212.5L780.5 215.5L783.5 218.5M791.5 212.5L788.5 215.5L791.5 218.5M799.5 212.5L796.5 215.5L799.5 218.5M807.5 212.5L804.5 215.5L807.5 218.5M815.5 212.5L812.5 215.5L815.5 218.5M823.5 212.5L820.5 215.5L823.5 218.5M831.5 212.5L828.5 215.5L831.5 218.5M839.5 212.5L836.5 215.5L839.5 218.5M847.5 212.5L844.5 215.5L847.5 218.5M855.5 212.5L852.5 215.5L855.5 218.5M863.5 212.5L860.5 215.5L863.5 218.5M871.5 212.5L868.5 215.5L871.5 218.5M879.5 212.5L876.5 215.5L879.5 218.5M887.5 212.5L884.5 215.5L887.5 218.5M895.5 212.5L892.5 215.5L895.5 218.5M903.5 212.5L900.5 215.5L903.5 218.5M911.5 212.5L908.5 215.5L911.5 218.5M919.5 212.5L916.5 215.5L919.5 218.5M927.5 212.5L924.5 215.5L927.5 218.5M935.5 212.5L932.5 215.5L935.5 218.5M943.5 212.5L940.5 215.5L943.5 218.5" stroke="#0c0c78" stroke-width="1" fill="none"/><path d="M156 231.5 H949" stroke="#0868ac" stroke-width="1" fill="none"/><path d="M159.5 228.5L156.5 231.5L159.5 234.5M167.5 228.5L164.5 231.5L167.5 234.5M175.5 228.5L172.5 231.5L175.5 234.5M183.5 228.5L180.5 231.5L183.5 234.5M191.5 228.5L188.5 231.5L191.5 234.5M199.5 228.5L196.5 231.5L199.5 234.5M207.5 228.5L204.5 231.5L207.5 234.5M215.5 228.5L212.5 231.5L215.5 234.5M223.5 228.5L220.5 231.5L223.5 234.5M231.5 228.5L228.5 231.5L231.5 234.5M239.5 228.5L236.5 231.5L239.5 234.5M247.5 228.5L244.5 231.5L247.5 234.5M255.5 228.5L252.5 231.5L255.5 234.5M263.5 228.5L260.5 231.5L263.5 234.5M271.5 228.5L268.5 231.5L271.5 234.5M279.5 228.5L276.5 231.5L279.5 234.5M287.5 228.5L284.5 231.5L287.5 234.5M295.5 228.5L292.5 231.5L295.5 234.5M303.5 228.5L300.5 231.5L303.5 234.5M311.5 228.5L308.5 231.5L311.5 234.5M319.5 228.5L316.5 231.5L319.5 234.5M327.5 228.5L324.5 231.5L327.5 234.5M335.5 228.5L332.5 231.5L335.5 234.5M343.5 228.5L340.5 231.5L343.5 234.5M351.5 228.5L348.5 231.5L351.5 234.5M359.5 228.5L356.5 231.5L359.5 234.5M367.5 228.5L364.5 231.5L367.5 234.5M375.5 228.5L372.5 231.5L375.5 234.5M383.5 228.5L380.5 231.5L383.5 234.5M391.5 228.5L388.5 231.5L391.5 234.5M399.5 228.5L396.5 231.5L399.5 234.5M407.5 228.5L404.5 231.5L407.5 234.5M415.5 228.5L412.5 231.5L415.5 234.5M423.5 228.5L420.5 231.5L423.5 234.5M431.5 228.5L428.5 231.5L431.5 234.5M439.5 228.5L436.5 231.5L439.5 234.5M447.5 228.5L444.5 231.5L447.5 234.5M455.5 228.5L452.5 231.5L455.5 234.5M463.5 228.5L460.5 231.5L463.5 234.5M471.5 228.5L468.5 231.5L471.5 234.5M479.5 228.5L476.5 231.5L479.5 234.5M487.5 228.5L484.5 231.5L487.5 234.5M495.5 228.5L492.5 231.5L495.5 234.5M503.5 228.5L500.5 231.5L503.5 234.5M511.5 228.5L508.5 231.5L511.5 234.5M519.5 228.5L516.5 231.5L519.5 234.5M527.5 228.5L524.5 231.5L527.5 234.5M535.5 228.5L532.5 231.5L535.5 234.5M543.5 228.5L540.5 231.5L543.5 234.5M551.5 228.5L548.5 231.5L551.5 234.5M559.5 228.5L556.5 231.5L559.5 234.5M567.5 228.5L564.5 231.5L567.5 234.5M575.5 228.5L572.5 231.5L575.5 234.5M583.5 228.5L580.5 231.5L583.5 234.5M591.5 228.5L588.5 231.5L591.5 234.5M599.5 228.5L596.5 231.5L599.5 234.5M607.5 228.5L604.5 231.5L607.5 234.5M615.5 228.5L612.5 231.5L615.5 234.5M623.5 228.5L620.5 231.5L623.5 234.5M631.5 228.5L628.5 231.5L631.5 234.5M639.5 228.5L636.5 231.5L639.5 234.5M647.5 228.5L644.5 231.5L647.5 234.5M655.5 228.5L652.5 231.5L655.5 234.5M663.5 228.5L660.5 231.5L663.5 234.5M671.5 228.5L668.5 231.5L671.5 234.5M679.5 228.5L676.5 231.5L679.5 234.5M687.5 228.5L684.5 231.5L687.5 234.5M695.5 228.5L692.5 231.5L695.5 234.5M703.5 228.5L700.5 231.5L703.5 234.5M711.5 228.5L708.5 231.5L711.5 234.5M719.5 228.5L716.5 231.5L719.5 234.5M727.5 228.5L724.5 231.5L727.5 234.5M735.5 228.5L732.5 231.5L735.5 234.5M743.5 228.5L740.5 231.5L743.5 234.5M751.5 228.5L748.5 231.5L751.5 234.5M759.5 228.5L756.5 231.5L759.5 234.5M767.5 228.5L764.5 231.5L767.5 234.5M775.5 228.5L772.5 231.5L775.5 234.5M783.5 228.5L780.5 231.5L783.5 234.5M791.5 228.5L788.5 231.5L791.5 234.5M799.5 228.5L796.5 231.5L799.5 234.5M807.5 228.5L804.5 231.5L807.5 234.5M815.5 228.5L812.5 231.5L815.5 234.5M823.5 228.5L820.5 231.5L823.5 234.5M831.5 228.5L828.5 231.5L831.5 234.5M839.5 228.5L836.5 231.5L839.5 234.5M847.5 228.5L844.5 231.5L847.5 234.5M855.5 228.5L852.5 231.5L855.5 234.5M863.5 228.5L860.5 231.5L863.5 234.5M871.5 228.5L868.5 231.5L871.5 234.5M879.5 228.5L876.5 231.5L879.5 234.5M887.5 228.5L884.5 231.5L887.5 234.5M895.5 228.5L892.5 231.5L895.5 234.5M903.5 228.5L900.5 231.5L903.5 234.5M911.5 228.5L908.5 231.5L911.5 234.5M919.5 228.5L916.5 231.5L919.5 234.5M927.5 228.5L924.5 231.5L927.5 234.5M935.5 228.5L932.5 231.5L935.5 234.5M943.5 228.5L940.5 231.5L943.5 234.5" stroke="#0868ac" stroke-width="1" fill="none"/></svg>
<div class="t s" style="left:491.20px;top:240px;letter-spacing:-0.052px;">RefSeq genes from NCBI</div>
<div class="t r nv" style="top:255px;letter-spacing:-0.11px">RefSeq Curated</div>
<div class="b" style="left:156px;top:262px;width:793px;height:1px;background:#0c0c78"></div>
<div class="t s" style="left:445.00px;top:271px;letter-spacing:-0.064px;">Publications: Sequences in Scientific Articles</div>
<div class="t r " style="top:286px;">Sequences</div>
<div class="t r " style="top:302px;">SNPs</div>
<div class="t gr" style="left:367.70px;top:319px;letter-spacing:0.031px;">OMIM Gene Phenotypes - Dark Green Can Be Disease-causing</div>
<div class="t r gr" style="top:333px;">OMIM Genes</div>
<div class="b" style="left:156px;top:333px;width:793px;height:15px;background:#bebebe"></div>
<div class="t s" style="left:435.50px;top:349px;letter-spacing:-0.002px;">Short Genetic Variants from dbSNP release 155</div>
<div class="t r " style="top:364px;letter-spacing:-0.12px">Common dbSNP(155)</div>
<div class="t " style="left:265.80px;top:381px;letter-spacing:0.061px;">Gene Expression in 54 tissues from GTEx RNA-seq of 17382 samples, 948 donors (V8, Aug 2019)</div>
<div class="t r " style="top:419px;">TBCA</div>
<div class="b" style="left:156px;top:396px;width:378px;height:57px;background:#fff;border:1px solid #f0f0f0;box-sizing:border-box"></div>
<div class="b" style="left:156px;top:401px;width:5px;height:51px;background:#FFA54F"></div>
<div class="b" style="left:163px;top:402px;width:5px;height:50px;background:#EE9A00"></div>
<div class="b" style="left:170px;top:397px;width:5px;height:55px;background:#8FBC8F"></div>
<div class="b" style="left:177px;top:401px;width:5px;height:51px;background:#8B1C62"></div>
<div class="b" style="left:184px;top:400px;width:5px;height:52px;background:#EE6A50"></div>
<div class="b" style="left:191px;top:397px;width:5px;height:55px;background:#FF0000"></div>
<div class="b" style="left:198px;top:401px;width:5px;height:51px;background:#CDB79E"></div>
<div class="b" style="left:205px;top:407px;width:5px;height:45px;background:#EEEE00"></div>
<div class="b" style="left:212px;top:406px;width:5px;height:46px;background:#EEEE00"></div>
<div class="b" style="left:219px;top:407px;width:5px;height:45px;background:#EEEE00"></div>
<div class="b" style="left:226px;top:403px;width:5px;height:49px;background:#EEEE00"></div>
<div class="b" style="left:233px;top:406px;width:5px;height:46px;background:#EEEE00"></div>
<div class="b" style="left:240px;top:409px;width:5px;height:43px;background:#EEEE00"></div>
<div class="b" style="left:247px;top:405px;width:5px;height:47px;background:#EEEE00"></div>
<div class="b" style="left:254px;top:408px;width:5px;height:44px;background:#EEEE00"></div>
<div class="b" style="left:261px;top:402px;width:5px;height:50px;background:#EEEE00"></div>
<div class="b" style="left:268px;top:405px;width:5px;height:47px;background:#EEEE00"></div>
<div class="b" style="left:275px;top:409px;width:5px;height:43px;background:#EEEE00"></div>
<div class="b" style="left:282px;top:402px;width:5px;height:50px;background:#EEEE00"></div>
<div class="b" style="left:289px;top:405px;width:5px;height:47px;background:#EEEE00"></div>
<div class="b" style="left:296px;top:401px;width:5px;height:51px;background:#00CDCD"></div>
<div class="b" style="left:303px;top:396px;width:5px;height:56px;background:#EE82EE"></div>
<div class="b" style="left:310px;top:396px;width:5px;height:56px;background:#9AC0CD"></div>
<div class="b" style="left:317px;top:398px;width:5px;height:54px;background:#EED5D2"></div>
<div class="b" style="left:324px;top:398px;width:5px;height:54px;background:#EED5D2"></div>
<div class="b" style="left:331px;top:401px;width:5px;height:51px;background:#CDB79E"></div>
<div class="b" style="left:338px;top:406px;width:5px;height:46px;background:#EEC591"></div>
<div class="b" style="left:345px;top:402px;width:5px;height:50px;background:#8B7355"></div>
<div class="b" style="left:352px;top:402px;width:5px;height:50px;background:#8B7355"></div>
<div class="b" style="left:359px;top:403px;width:5px;height:49px;background:#CDAA7D"></div>
<div class="b" style="left:366px;top:399px;width:5px;height:53px;background:#EED5D2"></div>
<div class="b" style="left:373px;top:410px;width:5px;height:42px;background:#B452CD"></div>
<div class="b" style="left:380px;top:414px;width:5px;height:38px;background:#7A378B"></div>
<div class="b" style="left:387px;top:406px;width:5px;height:46px;background:#CDB79E"></div>
<div class="b" style="left:394px;top:403px;width:5px;height:49px;background:#CDB79E"></div>
<div class="b" style="left:401px;top:407px;width:5px;height:45px;background:#CDB79E"></div>
<div class="b" style="left:408px;top:402px;width:5px;height:50px;background:#9ACD32"></div>
<div class="b" style="left:415px;top:407px;width:5px;height:45px;background:#CDB79E"></div>
<div class="b" style="left:422px;top:412px;width:5px;height:40px;background:#7A67EE"></div>
<div class="b" style="left:429px;top:399px;width:5px;height:53px;background:#FFD700"></div>
<div class="b" style="left:436px;top:396px;width:5px;height:56px;background:#FFB6C1"></div>
<div class="b" style="left:443px;top:415px;width:5px;height:37px;background:#CD9B1D"></div>
<div class="b" style="left:450px;top:400px;width:5px;height:52px;background:#B4EEB4"></div>
<div class="b" style="left:457px;top:402px;width:5px;height:50px;background:#D9D9D9"></div>
<div class="b" style="left:464px;top:407px;width:5px;height:45px;background:#3A5FCD"></div>
<div class="b" style="left:471px;top:408px;width:5px;height:44px;background:#1E90FF"></div>
<div class="b" style="left:478px;top:407px;width:5px;height:45px;background:#CDB79E"></div>
<div class="b" style="left:485px;top:405px;width:5px;height:47px;background:#CDB79E"></div>
<div class="b" style="left:492px;top:405px;width:5px;height:47px;background:#FFD39B"></div>
<div class="b" style="left:499px;top:405px;width:5px;height:47px;background:#A6A6A6"></div>
<div class="b" style="left:506px;top:400px;width:5px;height:52px;background:#008B45"></div>
<div class="b" style="left:513px;top:398px;width:5px;height:54px;background:#EED5D2"></div>
<div class="b" style="left:520px;top:400px;width:5px;height:52px;background:#EED5D2"></div>
<div class="b" style="left:527px;top:424px;width:5px;height:28px;background:#FF00FF"></div>
<div class="b" style="left:156px;top:453px;width:793px;height:2px;background:#00007a"></div>
<div class="t " style="left:281.30px;top:458px;letter-spacing:0.055px;">H3K27Ac Mark (Often Found Near Active Regulatory Elements) on 7 cell lines from ENCODE</div>
<div class="t " style="left:13px;top:472px;">Layered H3K27Ac</div>
<div class="b" style="left:156px;top:497px;width:793px;height:1px;background:#cc70ff"></div>
<div class="b" style="left:156px;top:498px;width:793px;height:2px;background:#d388ff"></div>
<div class="b" style="left:156px;top:500px;width:793px;height:1px;background:#d04080"></div>
<div class="b" style="left:156px;top:501px;width:793px;height:1px;background:#300860"></div>
<div class="t r " style="top:503px;color:#3c3c8c">4.88 <span style="position:relative;top:-1.5px;left:0.4px">_</span></div>
<div class="t " style="left:405.40px;top:504px;letter-spacing:0.035px;color:#3c3c8c">100 vertebrates Basewise Conservation by PhyloP</div>
<div class="t " style="left:13px;top:528px;color:#3c3c8c">100 Vert. Cons</div>
<div class="t r " style="top:553px;color:#8c3c3c">-4.5 <span style="position:relative;top:-1.5px;left:0.4px">_</span></div>
<svg width="950" height="765" viewBox="0 0 950 765" font-family="Liberation Sans, sans-serif" text-rendering="geometricPrecision"><text x="0" y="0" font-size="60" fill="#00ff00" fill-opacity="1" transform="translate(168,545) scale(1.035,0.02422)">T</text><rect x="168" y="544" width="38" height="1" fill="#00ff00" fill-opacity="0.11"/><text x="0" y="0" font-size="60" fill="#ff0000" fill-opacity="1" transform="translate(385.073,543) scale(1.035,0.19380)">A</text><text x="0" y="0" font-size="60" fill="#0000ff" fill-opacity="1" transform="translate(456.164,547) scale(1.035,0.07267)">G</text><text x="0" y="0" font-size="60" fill="#ff0000" fill-opacity="1" transform="translate(457.164,549) scale(1.035,0.04845)">A</text><text x="0" y="0" font-size="60" fill="#00ff00" fill-opacity="1" transform="translate(529.255,543) scale(1.035,0.07267)">T</text><text x="0" y="0" font-size="60" fill="#ff0000" fill-opacity="1" transform="translate(601.345,543) scale(1.035,0.09690)">A</text><text x="0" y="0" font-size="60" fill="#ff0000" fill-opacity="1" transform="translate(673.436,543) scale(1.035,0.14535)">A</text><text x="0" y="0" font-size="60" fill="#a8a800" fill-opacity="0.8" transform="translate(744.527,543) scale(1.035,0.02422)">C</text><text x="0" y="0" font-size="60" fill="#ff0000" fill-opacity="1" transform="translate(745.527,542) scale(1.035,0.19380)">A</text><text x="0" y="0" font-size="60" fill="#ff0000" fill-opacity="1" transform="translate(817.618,543) scale(1.035,0.19380)">A</text></svg>
<div class="t nv" style="left:444.90px;top:570px;letter-spacing:0.109px;">Multiz Alignments of 100 Vertebrates</div>
<div class="t r " style="top:584px;color:#e6870a">Gaps</div>
<div class="t r nv" style="top:599px;">Human</div>
<div class="t n" style="left:186px;top:598px;font-size:14px;color:#0c0c78">T</div>
<div class="t n" style="left:258px;top:598px;font-size:14px;color:#0c0c78">C</div>
<div class="t n" style="left:330px;top:598px;font-size:14px;color:#0c0c78">T</div>
<div class="t n" style="left:402px;top:598px;font-size:14px;color:#0c0c78">A</div>
<div class="t n" style="left:474px;top:598px;font-size:14px;color:#0c0c78">A</div>
<div class="t n" style="left:546px;top:598px;font-size:14px;color:#0c0c78">T</div>
<div class="t n" style="left:618px;top:598px;font-size:14px;color:#0c0c78">A</div>
<div class="t n" style="left:690px;top:598px;font-size:14px;color:#0c0c78">A</div>
<div class="t n" style="left:762px;top:598px;font-size:14px;color:#0c0c78">A</div>
<div class="t n" style="left:834px;top:598px;font-size:14px;color:#0c0c78">A</div>
<div class="t n" style="left:906px;top:598px;font-size:14px;color:#0c0c78">A</div>
<div class="t r nv" style="top:614px;">Rhesus</div>
<div class="t n" style="left:186px;top:613px;font-size:14px;color:#0c0c78">T</div>
<div class="t n" style="left:258px;top:613px;font-size:14px;color:#0c0c78">C</div>
<div class="t n" style="left:330px;top:613px;font-size:14px;color:#0c0c78">T</div>
<div class="t n" style="left:402px;top:613px;font-size:14px;color:#0c0c78">A</div>
<div class="t n" style="left:474px;top:613px;font-size:14px;color:#0c0c78">A</div>
<div class="t n" style="left:546px;top:613px;font-size:14px;color:#0c0c78">T</div>
<div class="t n" style="left:618px;top:613px;font-size:14px;color:#0c0c78">A</div>
<div class="t n" style="left:690px;top:613px;font-size:14px;color:#0c0c78">A</div>
<div class="t n" style="left:762px;top:613px;font-size:14px;color:#0c0c78">A</div>
<div class="t n" style="left:834px;top:613px;font-size:14px;color:#0c0c78">A</div>
<div class="t n" style="left:906px;top:613px;font-size:14px;color:#0c0c78">A</div>
<div class="t r gr" style="top:629px;">Mouse</div>
<div class="t n" style="left:185px;top:628px;font-size:14px;color:#8c8cbc">C</div>
<div class="t n" style="left:258px;top:628px;font-size:14px;color:#8c8cbc">T</div>
<div class="t n" style="left:330px;top:628px;font-size:14px;color:#0c0c78">T</div>
<div class="t n" style="left:402px;top:628px;font-size:14px;color:#0c0c78">A</div>
<div class="t n" style="left:474px;top:628px;font-size:14px;color:#0c0c78">A</div>
<div class="t n" style="left:546px;top:628px;font-size:14px;color:#0c0c78">T</div>
<div class="t n" style="left:618px;top:628px;font-size:14px;color:#0c0c78">A</div>
<div class="t n" style="left:690px;top:628px;font-size:14px;color:#0c0c78">A</div>
<div class="t n" style="left:762px;top:628px;font-size:14px;color:#8c8cbc">C</div>
<div class="t n" style="left:834px;top:628px;font-size:14px;color:#0c0c78">A</div>
<div class="t n" style="left:906px;top:628px;font-size:14px;color:#0c0c78">A</div>
<div class="t r nv" style="top:644px;">Dog</div>
<div class="t n" style="left:186px;top:643px;font-size:14px;color:#0c0c78">T</div>
<div class="t n" style="left:258px;top:643px;font-size:14px;color:#8c8cbc">T</div>
<div class="t n" style="left:330px;top:643px;font-size:14px;color:#0c0c78">T</div>
<div class="t n" style="left:402px;top:643px;font-size:14px;color:#0c0c78">A</div>
<div class="t n" style="left:473px;top:643px;font-size:14px;color:#8c8cbc">G</div>
<div class="t n" style="left:546px;top:643px;font-size:14px;color:#0c0c78">T</div>
<div class="t n" style="left:618px;top:643px;font-size:14px;color:#0c0c78">A</div>
<div class="t n" style="left:690px;top:643px;font-size:14px;color:#0c0c78">A</div>
<div class="t n" style="left:762px;top:643px;font-size:14px;color:#0c0c78">A</div>
<div class="t n" style="left:834px;top:643px;font-size:14px;color:#0c0c78">A</div>
<div class="t n" style="left:907px;top:645px;color:#8c8cbc">=</div>
<div class="t r gr" style="top:659px;">Elephant</div>
<div class="t n" style="left:186px;top:658px;font-size:14px;color:#0c0c78">T</div>
<div class="t n" style="left:258px;top:658px;font-size:14px;color:#0c0c78">C</div>
<div class="t n" style="left:330px;top:658px;font-size:14px;color:#0c0c78">T</div>
<div class="t n" style="left:402px;top:658px;font-size:14px;color:#0c0c78">A</div>
<div class="t n" style="left:474px;top:658px;font-size:14px;color:#8c8cbc">C</div>
<div class="t n" style="left:546px;top:658px;font-size:14px;color:#0c0c78">T</div>
<div class="t n" style="left:618px;top:658px;font-size:14px;color:#0c0c78">A</div>
<div class="t n" style="left:690px;top:658px;font-size:14px;color:#0c0c78">A</div>
<div class="t n" style="left:762px;top:658px;font-size:14px;color:#0c0c78">A</div>
<div class="t n" style="left:834px;top:658px;font-size:14px;color:#0c0c78">A</div>
<div class="t n" style="left:907px;top:660px;color:#8c8cbc">=</div>
<div class="t r gr" style="top:674px;">Chicken</div>
<div class="t n" style="left:186px;top:673px;font-size:14px;color:#0c0c78">T</div>
<div class="t n" style="left:258px;top:673px;font-size:14px;color:#0c0c78">C</div>
<div class="t n" style="left:332px;top:674px;color:#8c8cbc">-</div>
<div class="t n" style="left:402px;top:673px;font-size:14px;color:#0c0c78">A</div>
<div class="t n" style="left:474px;top:673px;font-size:14px;color:#8c8cbc">C</div>
<div class="t n" style="left:546px;top:673px;font-size:14px;color:#8c8cbc">A</div>
<div class="t n" style="left:618px;top:673px;font-size:14px;color:#0c0c78">A</div>
<div class="t n" style="left:691px;top:675px;color:#8c8cbc">=</div>
<div class="t n" style="left:763px;top:675px;color:#8c8cbc">=</div>
<div class="t n" style="left:835px;top:675px;color:#8c8cbc">=</div>
<div class="t n" style="left:907px;top:675px;color:#8c8cbc">=</div>
<div class="t r nv" style="top:689px;">X_tropicalis</div>
<div class="t n" style="left:185px;top:688px;font-size:14px;color:#8c8cbc">A</div>
<div class="t n" style="left:257px;top:688px;font-size:14px;color:#8c8cbc">G</div>
<div class="t n" style="left:332px;top:689px;color:#8c8cbc">-</div>
<div class="t n" style="left:404px;top:689px;color:#8c8cbc">-</div>
<div class="t n" style="left:476px;top:689px;color:#8c8cbc">-</div>
<div class="t n" style="left:548px;top:689px;color:#8c8cbc">-</div>
<div class="t n" style="left:618px;top:688px;font-size:14px;color:#0c0c78">A</div>
<div class="t n" style="left:690px;top:688px;font-size:14px;color:#0c0c78">A</div>
<div class="t n" style="left:762px;top:688px;font-size:14px;color:#8c8cbc">G</div>
<div class="t n" style="left:834px;top:688px;font-size:14px;color:#0c0c78">A</div>
<div class="t n" style="left:909px;top:689px;color:#8c8cbc">-</div>
<div class="t r gr" style="top:704px;">Zebrafish</div>
<div class="t " style="left:567.7px;width:40px;text-align:center;top:584px;font-size:13px;color:#e6870a">3</div>
<div class="t " style="left:639.5px;width:40px;text-align:center;top:584px;font-size:13px;color:#e6870a">4</div>
<div class="b" style="left:588px;top:643px;width:1px;height:14px;background:#e6870a"></div>
<div class="b" style="left:588px;top:658px;width:1px;height:14px;background:#e6870a"></div>
<div class="b" style="left:588px;top:673px;width:1px;height:14px;background:#e6870a"></div>
<div class="b" style="left:660px;top:688px;width:1px;height:14px;background:#e6870a"></div>
<div class="t " style="left:441.20px;top:720px;letter-spacing:0.012px;">Repeating Elements by RepeatMasker</div>
<div class="t r " style="top:734px;">RepeatMasker</div>
</div></body></html>
